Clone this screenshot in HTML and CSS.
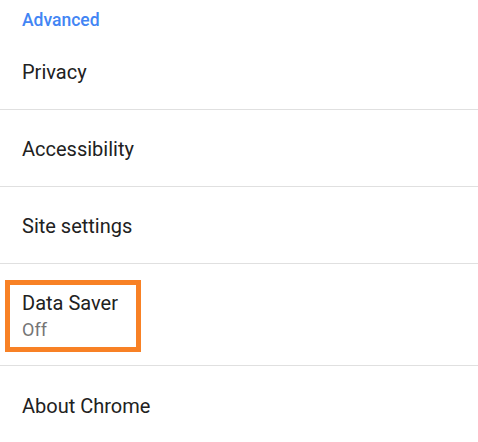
FILE: index.html
```html
<!DOCTYPE html>
<html>
<head>
<meta charset="utf-8">
<link rel="stylesheet" href="styles.css">
</head>
<body>
<div class="list">
  <div class="header">Advanced</div>
  <div class="row"><span class="title">Privacy</span></div>
  <div class="row"><span class="title">Accessibility</span></div>
  <div class="row"><span class="title">Site settings</span></div>
  <div class="row row-tall">
    <div class="highlight">
      <div class="title two">Data Saver</div>
      <div class="sub">Off</div>
    </div>
  </div>
  <div class="row last"><span class="title">About Chrome</span></div>
</div>
</body>
</html>
```
FILE: styles.css
```css
html, body {
  margin: 0;
  padding: 0;
  background: #ffffff;
}
body {
  font-family: Roboto, "Noto Sans", "Liberation Sans", sans-serif;
  width: 478px;
  height: 442px;
  overflow: hidden;
}
.list {
  display: flex;
  flex-direction: column;
}
.header {
  height: 33px;
  box-sizing: border-box;
  padding: 8px 0 0 22px;
  font-size: 17.5px;
  line-height: 24px;
  font-weight: 500;
  color: #4285f4;
}
.row {
  height: 77px;
  box-sizing: border-box;
  border-bottom: 1px solid #e0e0e0;
  padding: 2px 0 0 22px;
  display: flex;
  align-items: center;
}
.row.last {
  border-bottom: none;
}
.title {
  font-size: 20px;
  line-height: 26px;
  color: #212121;
}
.row-tall {
  height: 102px;
  padding: 16px 0 0 5px;
  align-items: flex-start;
}
.highlight {
  width: 136px;
  height: 72px;
  box-sizing: border-box;
  border: 5px solid #f88125;
  padding: 5px 0 0 12px;
  display: flex;
  flex-direction: column;
}
.sub {
  margin-top: 2px;
  font-size: 18px;
  line-height: 24px;
  color: #757575;
}
```
